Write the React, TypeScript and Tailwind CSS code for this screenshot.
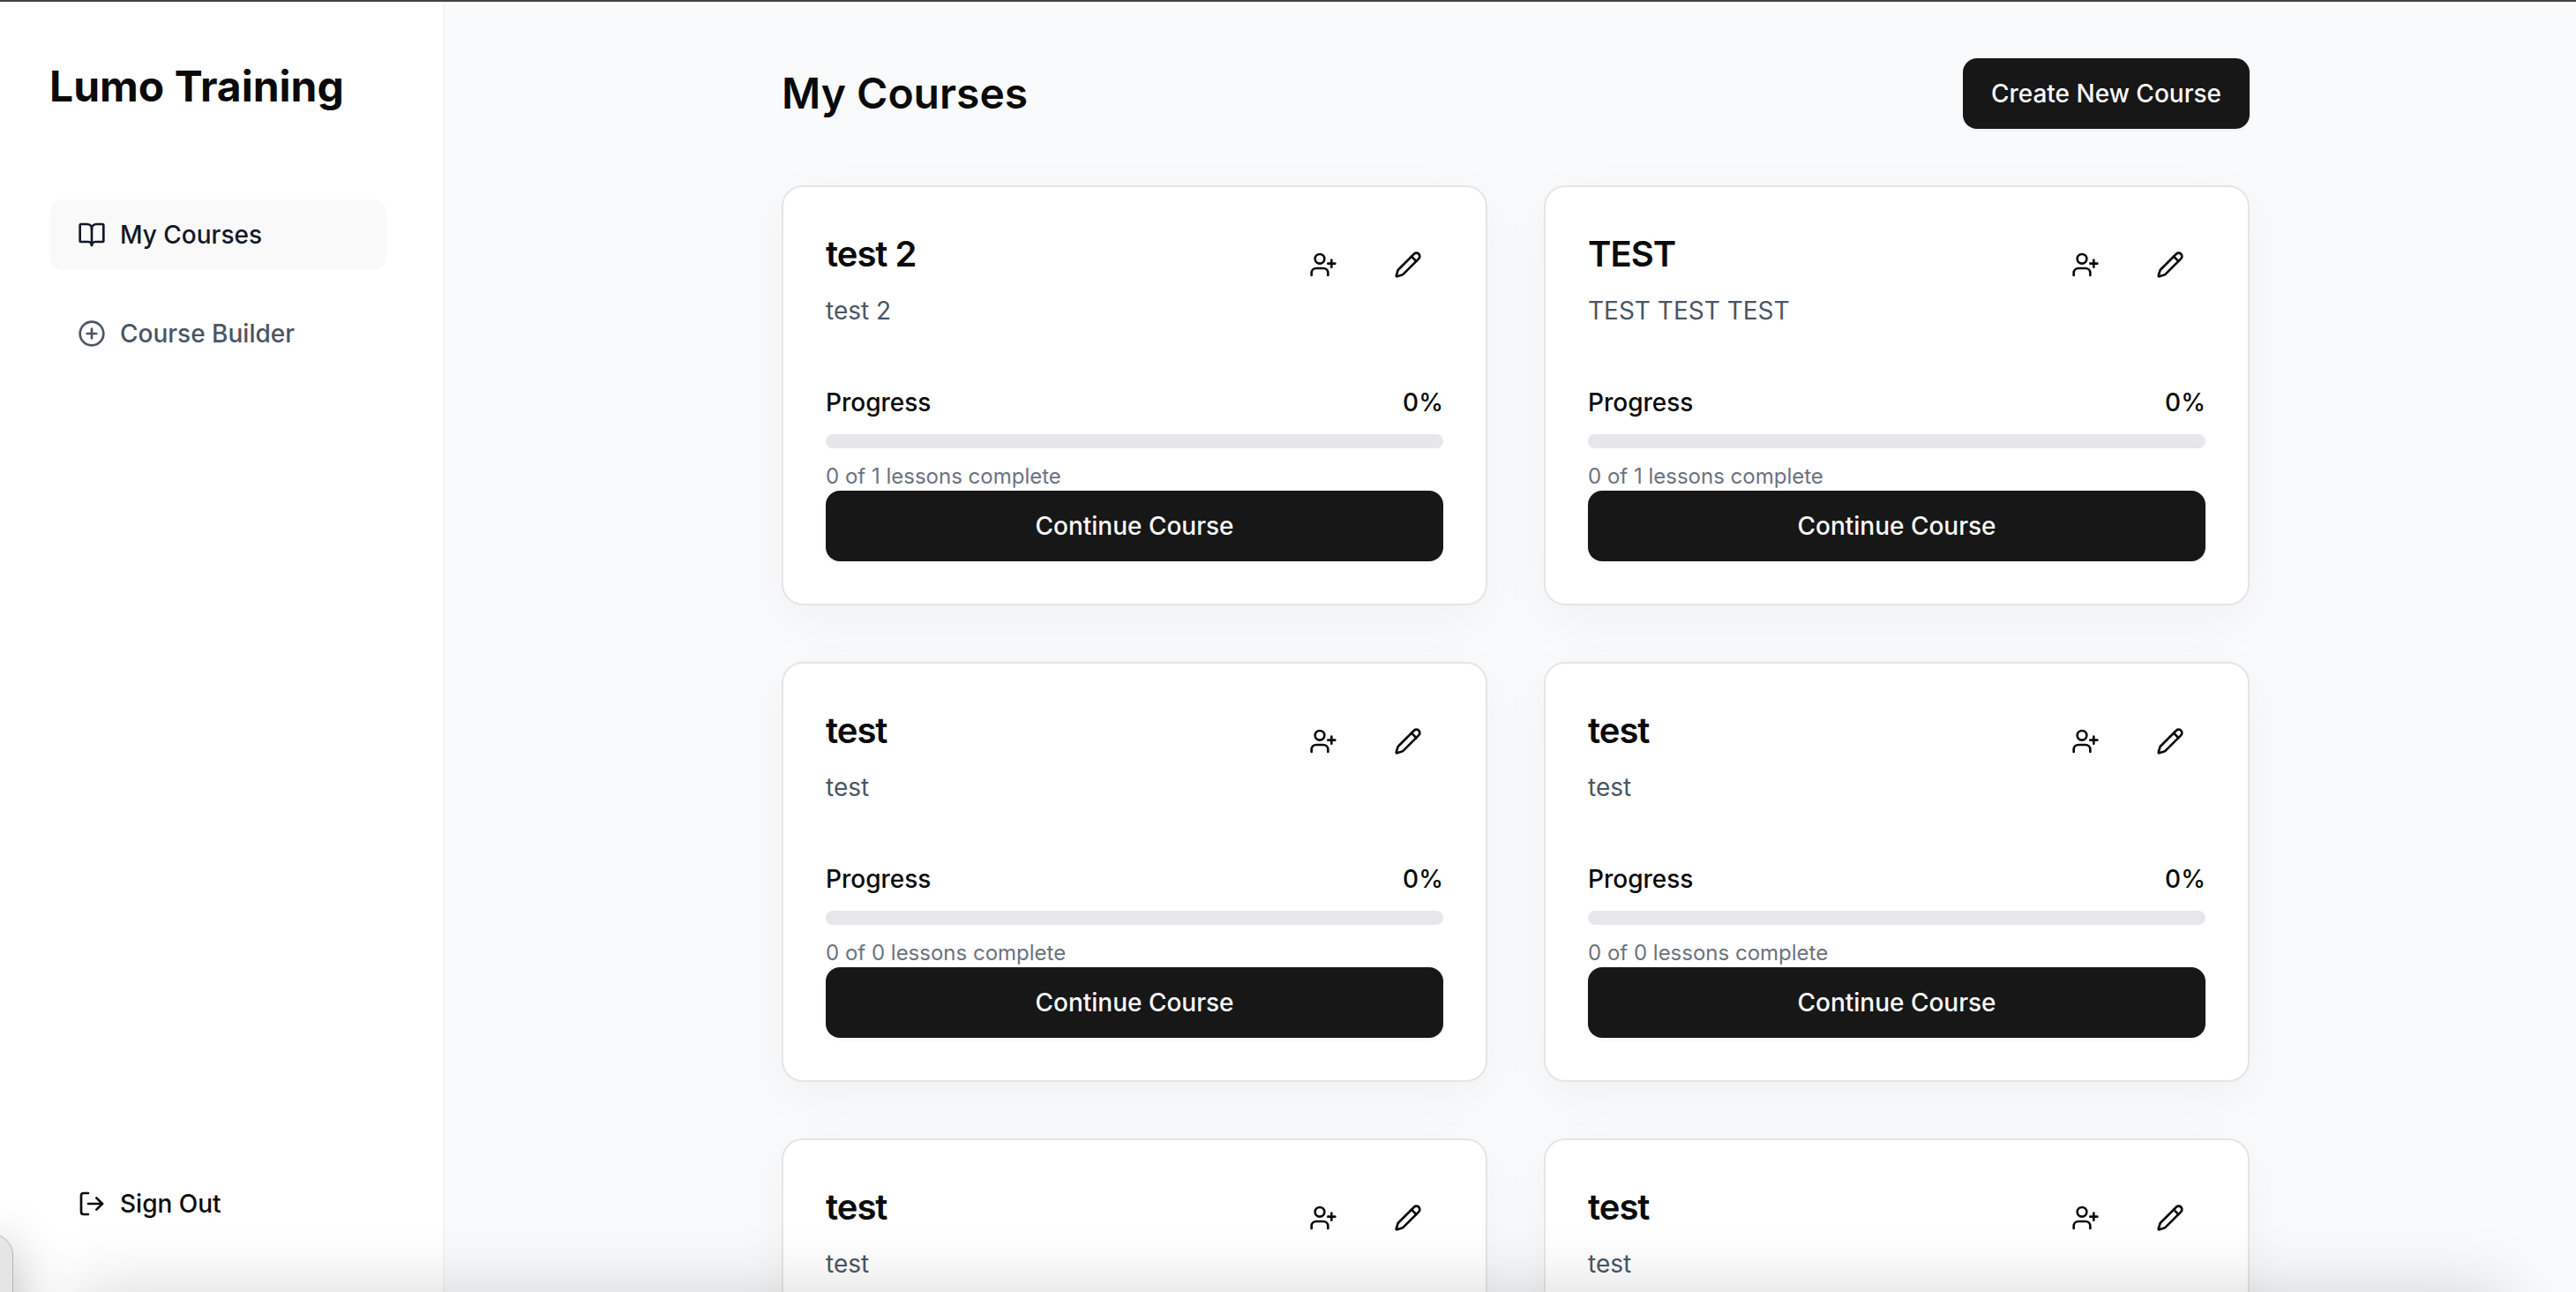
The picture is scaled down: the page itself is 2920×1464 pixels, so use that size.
import { BookOpen, CirclePlus, LogOut, Pencil, UserPlus } from "lucide-react";

const courses = [
  { title: "test 2", description: "test 2", lessons: 1 },
  { title: "TEST", description: "TEST TEST TEST", lessons: 1 },
  { title: "test", description: "test", lessons: 0 },
  { title: "test", description: "test", lessons: 0 },
  { title: "test", description: "test", lessons: 0 },
  { title: "test", description: "test", lessons: 0 },
];

function CourseCard({ title, description, lessons }: (typeof courses)[number]) {
  return (
    <article className="h-[476px] rounded-3xl border-2 border-[#e5e5e5] bg-white p-12 shadow-[0_16px_60px_rgba(0,0,0,0.04)]">
      <div className="flex items-start justify-between">
        <div>
          <h2 className="text-[40px] leading-14 font-semibold tracking-[-0.025em]">{title}</h2>
          <p className="mt-4 text-[28px] leading-10 text-[#4b5563]">{description}</p>
        </div>
        <div className="flex gap-4">
          <button className="flex size-20 items-center justify-center" aria-label="Add user">
            <UserPlus size={32} />
          </button>
          <button className="flex size-20 items-center justify-center" aria-label="Edit course">
            <Pencil size={32} />
          </button>
        </div>
      </div>
      <div className="mt-16 flex justify-between text-[28px] leading-10 font-medium">
        <span>Progress</span>
        <span>0%</span>
      </div>
      <div className="mt-4 h-4 rounded-full bg-gray-200" />
      <p className="mt-4 text-2xl leading-8 text-[#6b7280]">0 of {lessons} lessons complete</p>
      <button className="flex h-20 w-full items-center justify-center rounded-2xl bg-[#171717] text-[28px] font-medium text-neutral-50 shadow-[0_2px_4px_rgba(0,0,0,0.05)]">
        Continue Course
      </button>
    </article>
  );
}

export default function App() {
  return (
    <div className="relative h-[1464px] w-[2920px] overflow-hidden border-t-2 border-[#434343] bg-[#f9fafc] font-['Inter',sans-serif] text-neutral-950 antialiased">
      <div className="flex h-full">
        <aside className="flex w-[504px] shrink-0 flex-col border-r-2 border-[#f3f4f6] bg-white pr-16 pl-14">
          <h1 className="mt-16 text-5xl leading-16 font-bold">Lumo Training</h1>
          <nav className="mt-24 flex flex-col gap-8 text-[28px] font-medium">
            <a className="flex h-20 items-center gap-4 rounded-2xl bg-[#f9f9f9] px-8 text-[#111827]">
              <BookOpen size={32} />
              My Courses
            </a>
            <a className="flex h-20 items-center gap-4 rounded-2xl px-8 text-[#4b5563]">
              <CirclePlus size={32} />
              Course Builder
            </a>
          </nav>
          <button className="mt-auto mb-[60px] flex h-20 items-center gap-4 px-8 text-[28px] font-medium">
            <LogOut size={32} />
            Sign Out
          </button>
        </aside>
        <main className="flex-1 pt-16 pl-[382px]">
          <div className="w-[1664px]">
            <header className="flex h-20 items-center justify-between">
              <h2 className="text-5xl font-semibold">My Courses</h2>
              <button className="flex h-20 items-center rounded-2xl bg-[#171717] px-8 text-[28px] font-medium text-neutral-50 shadow-[0_2px_4px_rgba(0,0,0,0.05)]">
                Create New Course
              </button>
            </header>
            <div className="mt-16 grid grid-cols-2 gap-16">
              {courses.map((course, i) => (
                <CourseCard key={i} {...course} />
              ))}
            </div>
          </div>
        </main>
      </div>
      <div className="pointer-events-none absolute top-[1464px] left-[80px] h-24 w-[2760px] shadow-[0_0_80px_rgba(0,0,0,0.17)]" />
      <div className="absolute top-[1396px] -left-10 h-32 w-[55px] rounded-[24px] border border-[#b5b5b5] bg-[#e5e5e5] shadow-[0_16px_60px_rgba(0,0,0,0.3)]" />
    </div>
  );
}
